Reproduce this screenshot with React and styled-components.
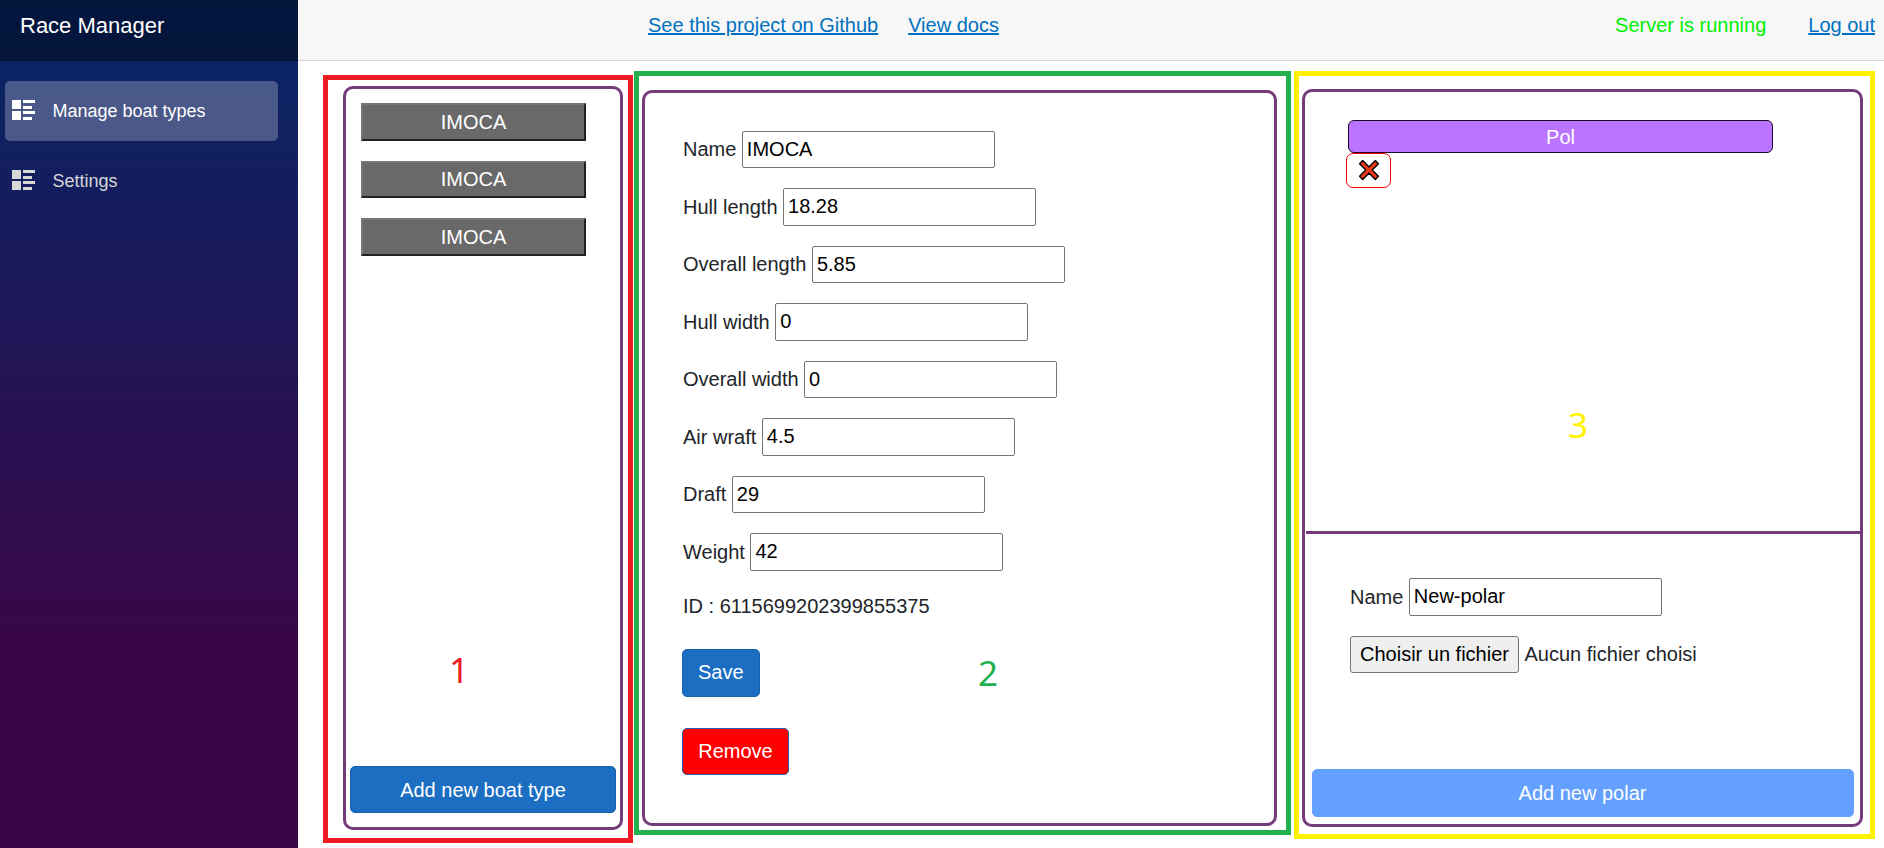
import React from "react";
import styled, { createGlobalStyle } from "styled-components";

const Global = createGlobalStyle`
  * { box-sizing: border-box; }
  body { margin: 0; background: #fff; overflow: hidden; }
  body, button, input { font-family: "Liberation Sans", Arial, sans-serif; font-size: 20px; }
  body { color: #212529; line-height: 30px; }
`;

const Page = styled.div`
  display: flex;
  width: 1884px;
  height: 848px;
`;
const Sidebar = styled.nav`
  width: 298px;
  flex: none;
  background: linear-gradient(180deg, #052767 0, #3a0647 650px);
`;
const Brand = styled.div`
  height: 61px;
  padding: 11px 0 0 20px;
  background: rgba(0, 0, 0, 0.4);
  color: #fff;
  font-size: 22px;
`;
const NavList = styled.div`
  display: flex;
  flex-direction: column;
  gap: 10px;
  padding: 20px 20px 0 5px;
`;
const NavItem = styled.a`
  display: flex;
  align-items: center;
  height: 60px;
  padding: 0 0 1px 7px;
  gap: 17.5px;
  border-radius: 5px;
  font-size: 18px;
  color: ${(p) => (p.$active ? "#fff" : "#d7d7d7")};
  background: ${(p) => (p.$active ? "rgba(255,255,255,0.25)" : "transparent")};

  svg {
    margin-top: -1px;
  }
`;
const Content = styled.div`
  flex: 1;
  display: flex;
  flex-direction: column;
`;
const TopBar = styled.header`
  display: flex;
  height: 61px;
  padding: 10px 9px 0 350px;
  background: #f7f7f7;
  border-bottom: 1px solid #d6d5d5;
`;
const Link = styled.a`
  color: #0071c1;
  text-decoration: underline;
  margin-right: ${(p) => p.$gap || 0}px;
`;
const Status = styled.span`
  margin: 0 42px 0 auto;
  color: #00f000;
`;
const Main = styled.main`
  display: flex;
  align-items: flex-start;
  padding: 10px 0 0 25px;
`;
const Frame = styled.section`
  position: relative;
  flex: none;
  display: flex;
  border: 5px solid ${(p) => p.$color};
`;
const BoatsFrame = styled(Frame)`
  width: 310px;
  height: 768px;
  margin-top: 4px;
  padding: 6px 5px 8px 15px;
`;
const DetailsFrame = styled(Frame)`
  width: 657px;
  height: 764px;
  margin-left: 1px;
  padding: 14px 9px 4px 3px;
`;
const PolarsFrame = styled(Frame)`
  width: 581px;
  height: 768px;
  margin-left: 3px;
  padding: 13px 7px 7px 3px;
`;
const Panel = styled.div`
  flex: 1;
  display: flex;
  flex-direction: column;
  border: 3px solid #753b7c;
  border-radius: 10px;
`;
const Marker = styled.span`
  position: absolute;
  left: ${(p) => p.$x}px;
  top: ${(p) => p.$y}px;
  font-family: "Noto Sans", sans-serif;
  font-size: 35px;
  line-height: 40px;
  color: ${(p) => p.$color};
`;
const BoatList = styled.div`
  flex: 1;
  display: flex;
  flex-direction: column;
  gap: 20px;
  padding: 14px 0 0 15px;
`;
const BoatButton = styled.button`
  width: 225px;
  height: 37.5px;
  padding: 1px 0 0;
  color: #fff;
  background: #696969;
  border: 2px solid;
  border-color: #767676 #212121 #212121 #767676;
`;
const Button = styled.button`
  height: 48px;
  padding: 0 15px;
  color: #fff;
  background: ${(p) => p.$bg || "#1b6ec2"};
  border: 1px solid ${(p) => p.$border || "#1861ac"};
  border-radius: 5px;
`;
const AddBoat = styled(Button)`
  height: 47px;
  padding-top: 1px;
  margin: 0 4px 14px;
`;
const AddPolar = styled(Button)`
  margin: auto 6px 7px 7px;
  padding-right: 16px;
`;
const Form = styled.div`
  display: flex;
  flex-direction: column;
  align-items: flex-start;
  gap: 20px;
  padding: ${(p) => p.$pad};
`;
const Field = styled.label`
  display: flex;
  align-items: center;
  gap: 5.5px;
  height: 37.5px;
`;
const Input = styled.input`
  width: 253px;
  height: 37.5px;
  padding: 1px 4px;
  color: #000;
  background: #fff;
  border: 1px solid #767676;
  border-radius: 2px;
`;
const BoatId = styled.div`
  margin-bottom: 8px;
`;
const Save = styled(Button)`
  margin: 0 0 11px -1px;
`;
const Remove = styled(Button)`
  height: 47px;
  width: 107px;
  margin-left: -1px;
`;
const PolarList = styled.div`
  height: 442px;
  padding: 28px 0 0 40px;
  margin-left: 1px;
  border-bottom: 3px solid #753b7c;
`;
const Polar = styled.button`
  display: block;
  width: 425px;
  height: 33px;
  padding: 1px 0 0;
  margin-left: 2px;
  color: #fff;
  background: #bb74ff;
  border: 1px solid #1a0a28;
  border-radius: 6px;
`;
const DeletePolar = styled.button`
  display: flex;
  align-items: center;
  justify-content: center;
  width: 45px;
  height: 35px;
  padding: 0 0 1px;
  background: #fff;
  border: 1px solid #f00;
  border-radius: 7px;
`;
const FileButton = styled.button`
  width: 169px;
  height: 37.5px;
  padding: 0;
  color: #000;
  background: #efefef;
  border: 1px solid #767676;
  border-radius: 3px;
`;

const ListIcon = () => (
  <svg width="23" height="20" viewBox="0 0 23 20" fill="currentColor">
    <path d="M0 0h9v9H0zM0 11h9v9H0zM11 0h12v3H11zM11 6h9v3h-9zM11 11h12v3H11zM11 17h9v3h-9z" />
  </svg>
);
const CrossIcon = () => (
  <svg width="22" height="22" viewBox="0 0 22 22">
    <path
      d="M4.700 1.600 11 8l6.300-6.400 3.100 3.100L14.200 11l6.200 6.300-3.100 3.100L11 14l-6.300 6.400-3.100-3.100L7.800 11 1.600 4.700z"
      fill="#f03a17"
      stroke="#000"
      strokeWidth="1.400"
      strokeLinejoin="round"
    />
  </svg>
);

const fields = [
  ["Name", "IMOCA"],
  ["Hull length", "18.28"],
  ["Overall length", "5.85"],
  ["Hull width", "0"],
  ["Overall width", "0"],
  ["Air wraft", "4.5"],
  ["Draft", "29"],
  ["Weight", "42"],
];
const boats = ["IMOCA", "IMOCA", "IMOCA"];

export default function App() {
  return (
    <Page>
      <Global />
      <Sidebar>
        <Brand>Race Manager</Brand>
        <NavList>
          <NavItem $active><ListIcon />Manage boat types</NavItem>
          <NavItem><ListIcon />Settings</NavItem>
        </NavList>
      </Sidebar>
      <Content>
        <TopBar>
          <Link $gap={30}>See this project on Github</Link>
          <Link>View docs</Link>
          <Status>Server is running</Status>
          <Link>Log out</Link>
        </TopBar>
        <Main>
          <BoatsFrame $color="#ed1c24">
            <Panel>
              <BoatList>
                {boats.map((b, i) => <BoatButton key={i}>{b}</BoatButton>)}
              </BoatList>
              <AddBoat>Add new boat type</AddBoat>
            </Panel>
            <Marker $x={121} $y={570} $color="#ed1c24">1</Marker>
          </BoatsFrame>
          <DetailsFrame $color="#22b14c">
            <Panel>
              <Form $pad="37.500px 0 0 38px">
                {fields.map(([label, value]) => (
                  <Field key={label}>{label}<Input defaultValue={value} /></Field>
                ))}
                <BoatId>ID : 6115699202399855375</BoatId>
                <Save>Save</Save>
                <Remove $bg="#f00">Remove</Remove>
              </Form>
            </Panel>
            <Marker $x={339} $y={577} $color="#22b14c">2</Marker>
          </DetailsFrame>
          <PolarsFrame $color="#fff200">
            <Panel>
              <PolarList>
                <Polar>Pol</Polar>
                <DeletePolar aria-label="Delete"><CrossIcon /></DeletePolar>
              </PolarList>
              <Form $pad="44px 0 0 45px">
                <Field>Name<Input defaultValue="New-polar" /></Field>
                <Field as="div"><FileButton>Choisir un fichier</FileButton>Aucun fichier choisi</Field>
              </Form>
              <AddPolar $bg="#64a0ff" $border="#64a0ff">Add new polar</AddPolar>
            </Panel>
            <Marker $x={269} $y={329} $color="#fff200">3</Marker>
          </PolarsFrame>
        </Main>
      </Content>
    </Page>
  );
}
